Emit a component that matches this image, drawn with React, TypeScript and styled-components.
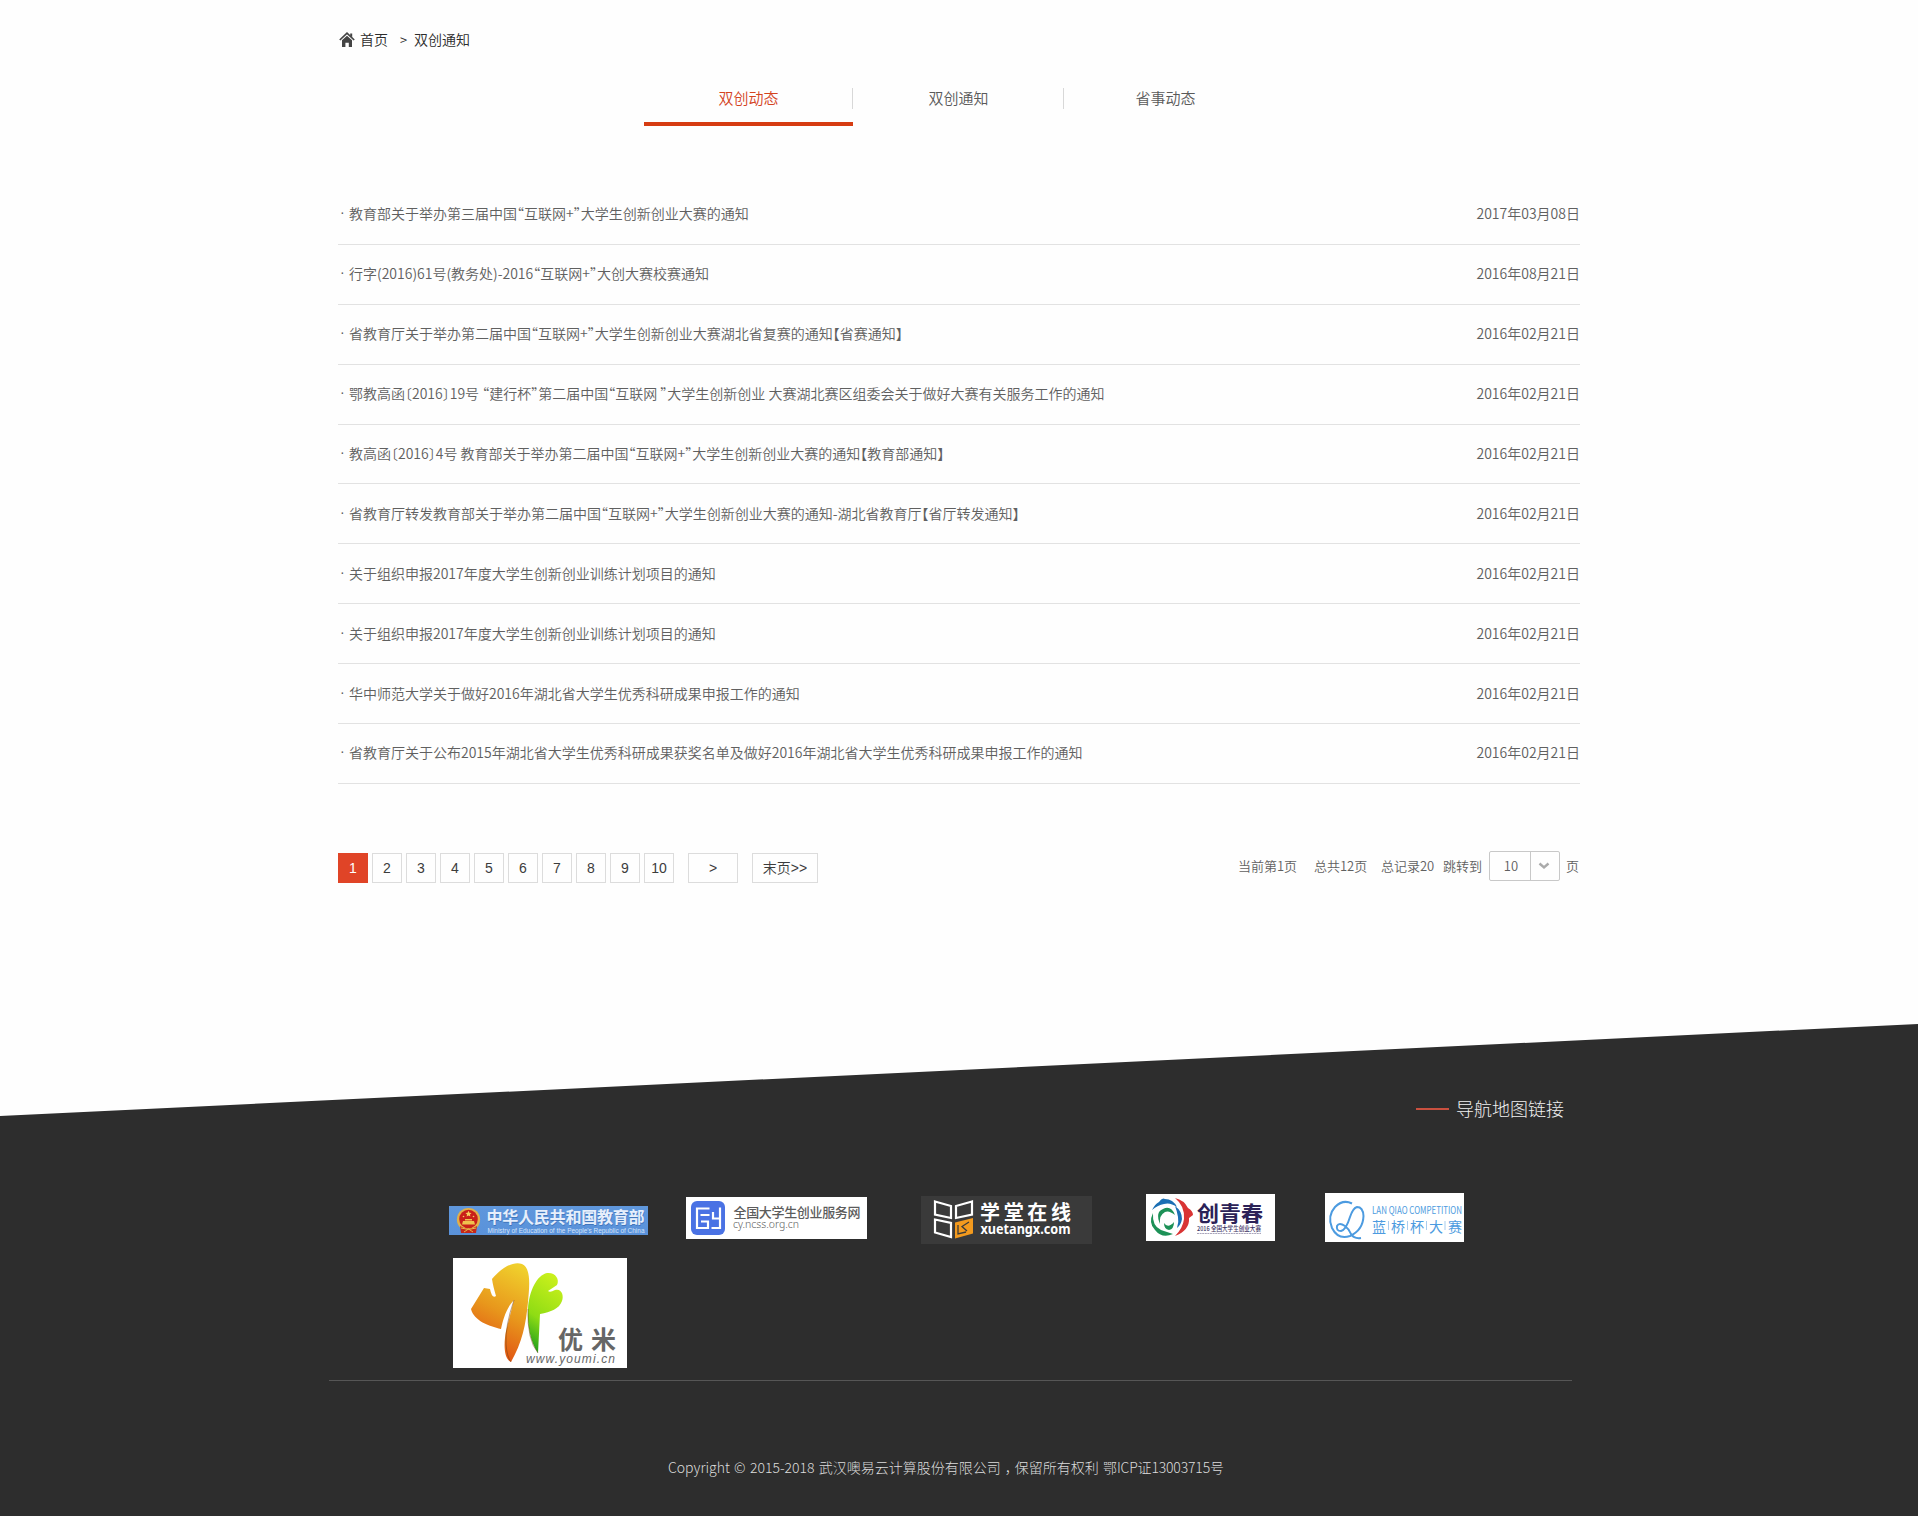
import React from 'react';
import styled, { createGlobalStyle } from 'styled-components';

const GlobalStyle = createGlobalStyle`
  * { box-sizing: border-box; }
  body { margin: 0; background: #fefefe; }
  ul, p, h2 { margin: 0; padding: 0; list-style: none; font-weight: inherit; }
  a { color: inherit; text-decoration: none; }
`;

const cjk = `'Noto Sans CJK SC', sans-serif`;

const Page = styled.div`
  width: 1918px;
  height: 1516px;
  overflow: hidden;
  display: flex;
  flex-direction: column;
  font-family: ${cjk};
  font-weight: 350;
  color: #606060;
`;

const Main = styled.main`
  width: 1242px;
  height: 1024px;
  margin-left: 338px;
`;

const Breadcrumb = styled.nav`
  display: flex;
  align-items: center;
  height: 20px;
  margin-top: 29px;
  padding-left: 1px;
  font-size: 14px;
  line-height: 20px;
  color: #2c2c2c;
  svg { margin: 1px 5px 0 0; }
`;

const Arrow = styled.span`
  margin: 2px 6px 0 12px;
  width: 8px;
  font-size: 13px;
`;

const Tabs = styled.div`
  display: flex;
  width: 628px;
  height: 44px;
  margin: 33px 0 0 306px;
`;

const Tab = styled.a<{ $active?: boolean; $width: number }>`
  width: ${p => p.$width}px;
  height: 44px;
  font-size: 15px;
  color: ${p => (p.$active ? '#d4441f' : '#5a5a5a')};
  border-bottom: 4px solid ${p => (p.$active ? '#d63c12' : 'transparent')};
`;

const TabLabel = styled.span<{ $divider?: boolean }>`
  display: block;
  height: 21px;
  margin-top: 6px;
  padding-left: 1px;
  line-height: 19px;
  text-align: center;
  border-right: 1px solid ${p => (p.$divider ? '#d8d8d8' : 'transparent')};
`;

const News = styled.ul`
  margin-top: 59px;
`;

const NewsItem = styled.li`
  height: 59.9px;
  display: flex;
  justify-content: space-between;
  align-items: center;
  padding-bottom: 2px;
  font-size: 14px;
  border-bottom: 1px solid #e2e2e2;
`;

const NewsTitle = styled.a`
  display: flex;
  white-space: pre;
  font-feature-settings: 'halt';
`;

const Bullet = styled.span`
  width: 11px;
  padding: 1px 0 0 2px;
  font-family: 'Liberation Sans', sans-serif;
`;

const PagerBar = styled.div`
  display: flex;
  justify-content: space-between;
  margin-top: 67px;
`;

const Pager = styled.div`
  display: flex;
  gap: 4px;
  padding-top: 2px;
`;

const PageButton = styled.a<{ $active?: boolean; $width?: number }>`
  width: ${p => p.$width ?? 30}px;
  height: 30px;
  margin-left: ${p => (p.$width ? 10 : 0)}px;
  display: flex;
  align-items: center;
  justify-content: center;
  font: 350 14px/26px 'Liberation Sans', ${cjk};
  color: ${p => (p.$active ? '#fff' : '#3c3c3c')};
  background: ${p => (p.$active ? '#e04427' : '#fefefe')};
  border: 1px solid ${p => (p.$active ? '#e04427' : '#dcdcdc')};
`;

const PagerInfo = styled.div`
  display: flex;
  align-items: center;
  height: 30px;
  padding-right: 1px;
  font-size: 13px;
  line-height: 28px;
`;

const Info = styled.span<{ $width: number }>`
  width: ${p => p.$width}px;
  white-space: nowrap;
`;

const Select = styled.div`
  display: flex;
  width: 71px;
  height: 30px;
  margin-right: 6px;
  border: 1px solid #c8c8c8;
  border-radius: 2px;
`;

const SelectValue = styled.span`
  width: 41px;
  padding-left: 2px;
  line-height: 27px;
  text-align: center;
  border-right: 1px solid #c8c8c8;
`;

const SelectToggle = styled.span`
  flex: 1;
  display: flex;
  align-items: center;
  justify-content: center;
  padding-right: 2px;
`;

const Footer = styled.footer`
  height: 492px;
  display: flex;
  flex-direction: column;
  color: #ddd;
  background: #2d2d2d;
  clip-path: polygon(0 92px, 100% 0, 100% 100%, 0 100%);
`;

const FooterTitle = styled.h2`
  display: flex;
  align-items: center;
  gap: 7px;
  height: 28px;
  margin: 70px 0 0 1416px;
  font-size: 18px;
  font-weight: 300;
  line-height: 28px;
  color: #f0f0f0;
`;

const Dash = styled.span`
  width: 33px;
  height: 2px;
  margin-top: 2px;
  background: #c9503f;
`;

const Partners = styled.div`
  width: 1243px;
  height: 259px;
  margin-left: 329px;
  padding: 71px 0 0 120px;
  border-bottom: 1px solid #565656;
`;

const LogoRow = styled.div`
  display: flex;
  align-items: flex-start;
`;

const Logo = styled.a<{ $w: number; $h: number; $top?: number; $left?: number; $bg?: string }>`
  display: block;
  flex: none;
  width: ${p => p.$w}px;
  height: ${p => p.$h}px;
  margin: ${p => p.$top ?? 0}px 0 0 ${p => p.$left ?? 0}px;
  background: ${p => p.$bg ?? '#fff'};
  svg { display: block; }
`;

const Copyright = styled.p`
  margin: 74px 0 0 668px;
  font-size: 14px;
  font-weight: 300;
  line-height: 24px;
  white-space: nowrap;
  word-spacing: 1.2px;
  color: #dcdcdc;
`;

const Comma = styled.span`
  position: relative;
  left: 4px;
`;

const Licence = styled.span`
  letter-spacing: -0.17px;
`;

const news: { title: string; date: string }[] = [
  { title: '教育部关于举办第三届中国“互联网+”大学生创新创业大赛的通知', date: '2017年03月08日' },
  { title: '行字(2016)61号(教务处)-2016“互联网+”大创大赛校赛通知', date: '2016年08月21日' },
  { title: '省教育厅关于举办第二届中国“互联网+”大学生创新创业大赛湖北省复赛的通知【省赛通知】', date: '2016年02月21日' },
  { title: '鄂教高函〔2016〕19号 “建行杯”第二届中国“互联网 ”大学生创新创业 大赛湖北赛区组委会关于做好大赛有关服务工作的通知', date: '2016年02月21日' },
  { title: '教高函〔2016〕4号 教育部关于举办第二届中国“互联网+”大学生创新创业大赛的通知【教育部通知】', date: '2016年02月21日' },
  { title: '省教育厅转发教育部关于举办第二届中国“互联网+”大学生创新创业大赛的通知-湖北省教育厅【省厅转发通知】', date: '2016年02月21日' },
  { title: '关于组织申报2017年度大学生创新创业训练计划项目的通知', date: '2016年02月21日' },
  { title: '关于组织申报2017年度大学生创新创业训练计划项目的通知', date: '2016年02月21日' },
  { title: '华中师范大学关于做好2016年湖北省大学生优秀科研成果申报工作的通知', date: '2016年02月21日' },
  { title: '省教育厅关于公布2015年湖北省大学生优秀科研成果获奖名单及做好2016年湖北省大学生优秀科研成果申报工作的通知', date: '2016年02月21日' },
];

const HomeIcon = () => (
  <svg width="16" height="16" viewBox="0 0 16 16">
    <path d="M0.800 8 8 1.200 15.200 8" fill="none" stroke="#444" strokeWidth="1.700" />
    <path d="M11.200 1.600h2v4l-2-2z" fill="#444" />
    <path d="M3 8.200 8 3.800l5 4.400V15H9.800v-4.200H6.400V15H3z" fill="#444" />
  </svg>
);

const MoeLogo = () => (
  <svg width="199" height="29" fontFamily="Noto Sans CJK SC, sans-serif">
    <defs>
      <linearGradient id="moe" x1="0" y1="0" x2="0" y2="1">
        <stop offset="0" stopColor="#5f97dc" />
        <stop offset="1" stopColor="#5a92da" />
      </linearGradient>
    </defs>
    <rect width="199" height="29" fill="url(#moe)" />
    <circle cx="19.500" cy="13.500" r="11.600" fill="#e2b04a" />
    <circle cx="19.500" cy="13" r="9.300" fill="#c9201a" />
    <path d="m19.500 4.800.9 2 2.100.2-1.600 1.400.5 2.100-1.900-1.100-1.900 1.100.5-2.100L16.500 7l2.100-.2z" fill="#f4cf5c" />
    <path d="M14 15h11l1 3.500H13zM16 13h7v1.500h-7z" fill="#efc24e" />
    <circle cx="14.500" cy="10.500" r=".8" fill="#f4cf5c" />
    <circle cx="24.500" cy="10.500" r=".8" fill="#f4cf5c" />
    <path d="M11 20q8.500 6 17 0l-1 7H12z" fill="#c5271b" />
    <path d="M12 22q7.500 3 15 0M15 26l4.500-3 4.500 3" fill="none" stroke="#e8b848" strokeWidth="1" />
    <text x="38" y="18" fontSize="16" fontWeight="700" fill="#2f62a8" opacity=".6" textLength="158">中华人民共和国教育部</text>
    <text x="37.500" y="17.200" fontSize="16" fontWeight="700" fill="#e6effc" textLength="158">中华人民共和国教育部</text>
    <text x="38.500" y="27" fontSize="6.500" fontFamily="Liberation Sans, sans-serif" fill="#d4e4fa" textLength="157" lengthAdjust="spacingAndGlyphs">Ministry of Education of the People's Republic of China</text>
  </svg>
);

const NcssLogo = () => (
  <svg width="181" height="42" fontFamily="Noto Sans CJK SC, sans-serif">
    <rect x="5" y="4" width="34" height="34" rx="6" fill="#4a72e4" />
    <g fill="none" stroke="#fff" strokeWidth="2.200">
      <path d="M23.500 11.500H11v19.500h11V24.500h-7M14.500 18h9" />
      <path d="M27 15v6.500h7M34 10.500v20.500h-8.500" />
    </g>
    <text x="47.500" y="20" fontSize="13" fontWeight="500" fill="#5c5c5c" textLength="127">全国大学生创业服务网</text>
    <text x="47" y="31" fontSize="10.500" fontFamily="Noto Sans, sans-serif" fill="#5c5c5c" textLength="66" lengthAdjust="spacingAndGlyphs">cy.ncss.org.cn</text>
  </svg>
);

const XuetangLogo = () => (
  <svg width="171" height="48" fontFamily="Noto Sans CJK SC, sans-serif">
    <path d="M14 5.500 30 10v12l-16-3.500zM51 5.500 35 10v12l16-3.500zM14 23.500 30 27v14l-16-4.500z" fill="none" stroke="#fff" strokeWidth="2.200" />
    <path d="M34 26.500 52 22v15.500l-18 5z" fill="#f39a1e" />
    <path d="m48 26-7 4.500 5 4.500M37 29v9l8-2" fill="none" stroke="#3a3a3a" strokeWidth="1.300" />
    <text x="59" y="23.500" fontSize="20" fontWeight="700" fill="#fff" textLength="91">学堂在线</text>
    <text x="59.500" y="37.500" fontSize="14.500" fontWeight="700" fontFamily="Noto Sans, sans-serif" fill="#fff" textLength="90" lengthAdjust="spacingAndGlyphs">xuetangx.com</text>
  </svg>
);

const YouthLogo = () => (
  <svg width="129" height="47" fontFamily="Noto Sans CJK SC, sans-serif">
    <g fill="#1b6fb4">
      <path d="M6 16Q9 10 13 8Q16 3 19 5Q27 5 31 13Q24 8 18 10Q12 11 6 16Z" />
      <path d="M29 12Q36 17 36 25Q35 31 31 34Q33 28 32 23Q31 17 29 12Z" />
    </g>
    <path d="M29 4Q38 6 42 14Q47 17 47 21L43 24Q44 36 29 42Q37 34 38 25Q39 12 29 4Z" fill="#d93434" />
    <g fill="#1d9157">
      <path d="M7 19Q6 32 15 36L27 40Q16 45 9 36Q2 29 7 19Z" />
      <path d="M14 30Q9 18 17 15Q25 11 29 21Q23 16 19 18Q13 21 14 30Z" />
      <path d="M18 29Q22 35 28 28Q28 35 23 36Q18 35 18 29Z" />
    </g>
    <text x="51" y="26.500" fontSize="21" fontWeight="700" fill="#2c2257" textLength="66" lengthAdjust="spacingAndGlyphs">创青春</text>
    <text x="51" y="37" fontSize="6.500" fontWeight="500" fill="#3b3263" textLength="64" lengthAdjust="spacingAndGlyphs">2016 全国大学生创业大赛</text>
    <path d="M51 39.500h64" stroke="#a9a5bb" strokeWidth="1" strokeDasharray="2 .6" />
  </svg>
);

const LanqiaoLogo = () => (
  <svg width="139" height="49" fontFamily="Noto Sans CJK SC, sans-serif">
    <path
      d="M27 10.500Q18 6 10 14Q2 23 7 35Q13 47 25 43Q38 37 38.500 23Q38 14 32 14Q28 15 25 24Q21 37 16 38Q11 38 12 33Q14 29 20 33Q24 36 26 41Q29 46 36 45"
      fill="none" stroke="#4c9be0" strokeWidth="2"
    />
    <text x="47" y="21" fontSize="10" fontWeight="400" fill="#4c9be0" textLength="90" lengthAdjust="spacingAndGlyphs">LAN QIAO COMPETITION</text>
    <text x="47" y="38.500" fontSize="14" fontWeight="400" fill="#4c9be0" textLength="90">蓝桥杯大赛</text>
    <path d="M63.500 28v9M82.500 28v9M101.500 28v9M120 28v9" stroke="#a9cdee" />
  </svg>
);

const YoumiLogo = () => (
  <svg width="174" height="110" fontFamily="Noto Sans CJK SC, sans-serif">
    <defs>
      <linearGradient id="leafA" x1=".7" y1="0" x2=".4" y2="1">
        <stop offset="0" stopColor="#f0cf2c" />
        <stop offset=".5" stopColor="#e8971c" />
        <stop offset="1" stopColor="#e04a12" />
      </linearGradient>
      <linearGradient id="leafB" x1=".6" y1="0" x2=".3" y2="1">
        <stop offset="0" stopColor="#c9f01c" />
        <stop offset=".6" stopColor="#8fdc14" />
        <stop offset="1" stopColor="#22a01c" />
      </linearGradient>
    </defs>
    <path d="M58 104C50 100 51 84 53 73L61 42C53 50 50 62 48 71C36 68 21 63 18 51L31 30L37 31Q39 41 43 38Q40 28 39 21C48 10 60 3 69 6C79 10 76 32 75 44C73 66 69 85 58 104Z" fill="url(#leafA)" />
    <path d="M85 95C78 85 74 68 75 51C76 33 84 17 94 15C102 14 107 21 104 27L95 33Q97 35 102 32C109 30 111 38 109 43C106 51 98 54 87 56Z" fill="url(#leafB)" />
    <path d="M61 42Q52 68 53 86 54 99 58 104M75 51Q74 82 85 95" fill="none" stroke="#753b0e" strokeWidth=".7" opacity=".7" />
    <text x="105" y="90.500" fontSize="25" fontWeight="700" fill="#666" textLength="58">优米</text>
    <text x="73" y="105" fontSize="12" fontStyle="italic" fontFamily="Liberation Sans, sans-serif" fill="#666" textLength="89">www.youmi.cn</text>
  </svg>
);

export default function App() {
  return (
    <Page>
      <GlobalStyle />
      <Main>
        <Breadcrumb>
          <HomeIcon />
          <a>首页</a>
          <Arrow>&gt;</Arrow>
          <a>双创通知</a>
        </Breadcrumb>
        <Tabs>
          <Tab $active $width={209}><TabLabel $divider>双创动态</TabLabel></Tab>
          <Tab $width={211}><TabLabel $divider>双创通知</TabLabel></Tab>
          <Tab $width={203}><TabLabel>省事动态</TabLabel></Tab>
        </Tabs>
        <News>
          {news.map((item, i) => (
            <NewsItem key={i}>
              <NewsTitle><Bullet>·</Bullet>{item.title}</NewsTitle>
              <span>{item.date}</span>
            </NewsItem>
          ))}
        </News>
        <PagerBar>
          <Pager>
            {Array.from({ length: 10 }, (_, i) => (
              <PageButton key={i} $active={i === 0}>{i + 1}</PageButton>
            ))}
            <PageButton $width={50}>&gt;</PageButton>
            <PageButton $width={66}>末页&gt;&gt;</PageButton>
          </Pager>
          <PagerInfo>
            <Info $width={76}>当前第1页</Info>
            <Info $width={67}>总共12页</Info>
            <Info $width={62}>总记录20</Info>
            <Info $width={46}>跳转到</Info>
            <Select>
              <SelectValue>10</SelectValue>
              <SelectToggle>
                <svg width="12" height="8" viewBox="0 0 12 8">
                  <path d="M1.500 1.500 6 5.500l4.500-4" fill="none" stroke="#aaa" strokeWidth="2.400" />
                </svg>
              </SelectToggle>
            </Select>
            <span>页</span>
          </PagerInfo>
        </PagerBar>
      </Main>
      <Footer>
        <FooterTitle><Dash />导航地图链接</FooterTitle>
        <Partners>
          <LogoRow>
            <Logo $w={199} $h={29} $top={13}><MoeLogo /></Logo>
            <Logo $w={181} $h={42} $top={4} $left={38}><NcssLogo /></Logo>
            <Logo $w={171} $h={48} $top={3} $left={54} $bg="#3a3a3a"><XuetangLogo /></Logo>
            <Logo $w={129} $h={47} $top={1} $left={54}><YouthLogo /></Logo>
            <Logo $w={139} $h={49} $left={50}><LanqiaoLogo /></Logo>
          </LogoRow>
          <LogoRow>
            <Logo $w={174} $h={110} $top={14} $left={4}><YoumiLogo /></Logo>
          </LogoRow>
        </Partners>
        <Copyright>
          Copyright © 2015-2018 武汉噢易云计算股份有限公司<Comma>，</Comma>保留所有权利 <Licence>鄂ICP证13003715号</Licence>
        </Copyright>
      </Footer>
    </Page>
  );
}
